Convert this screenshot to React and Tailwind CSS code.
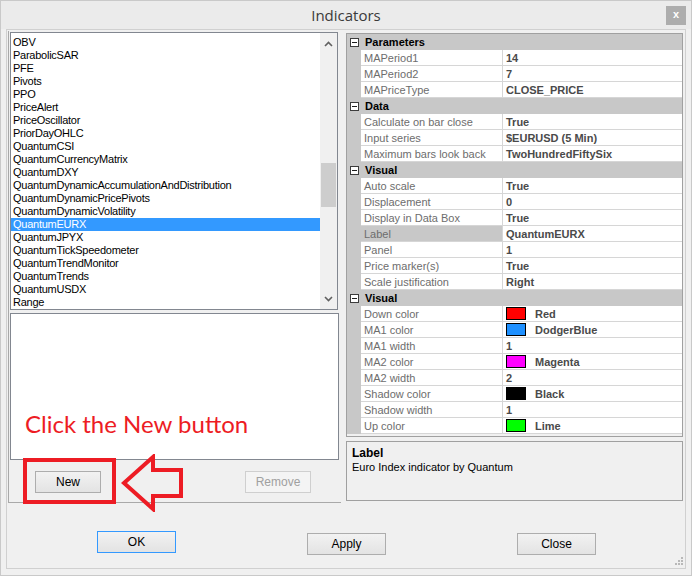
const indicators = [
  "OBV",
  "ParabolicSAR",
  "PFE",
  "Pivots",
  "PPO",
  "PriceAlert",
  "PriceOscillator",
  "PriorDayOHLC",
  "QuantumCSI",
  "QuantumCurrencyMatrix",
  "QuantumDXY",
  "QuantumDynamicAccumulationAndDistribution",
  "QuantumDynamicPricePivots",
  "QuantumDynamicVolatility",
  "QuantumEURX",
  "QuantumJPYX",
  "QuantumTickSpeedometer",
  "QuantumTrendMonitor",
  "QuantumTrends",
  "QuantumUSDX",
  "Range",
];

const sections = [
  {
    name: "Parameters",
    rows: [
      { name: "MAPeriod1", value: "14" },
      { name: "MAPeriod2", value: "7" },
      { name: "MAPriceType", value: "CLOSE_PRICE" },
    ],
  },
  {
    name: "Data",
    rows: [
      { name: "Calculate on bar close", value: "True" },
      { name: "Input series", value: "$EURUSD (5 Min)" },
      { name: "Maximum bars look back", value: "TwoHundredFiftySix" },
    ],
  },
  {
    name: "Visual",
    rows: [
      { name: "Auto scale", value: "True" },
      { name: "Displacement", value: "0" },
      { name: "Display in Data Box", value: "True" },
      { name: "Label", value: "QuantumEURX", selected: true },
      { name: "Panel", value: "1" },
      { name: "Price marker(s)", value: "True" },
      { name: "Scale justification", value: "Right" },
    ],
  },
  {
    name: "Visual",
    rows: [
      { name: "Down color", value: "Red", color: "#ff0000" },
      { name: "MA1 color", value: "DodgerBlue", color: "#1e90ff" },
      { name: "MA1 width", value: "1" },
      { name: "MA2 color", value: "Magenta", color: "#ff00ff" },
      { name: "MA2 width", value: "2" },
      { name: "Shadow color", value: "Black", color: "#000000" },
      { name: "Shadow width", value: "1" },
      { name: "Up color", value: "Lime", color: "#00ff00" },
    ],
  },
];

const MinusBox = () => (
  <div className="w-[9px] h-[9px] border border-[#3c3c3c] bg-white flex items-center justify-center">
    <div className="w-[5px] h-[1px] bg-[#1e1e1e]" />
  </div>
);

const Chevron = ({ up }) => (
  <svg width="9" height="6" viewBox="0 0 9 6">
    <path
      d={up ? "M1 5 L4.5 1.5 L8 5" : "M1 1 L4.5 4.5 L8 1"}
      fill="none"
      stroke="#606060"
      strokeWidth="1.6"
    />
  </svg>
);

const WinButton = ({ children, width, focused, disabled }) => (
  <button
    className={`h-[22px] ${width} border ${
      focused ? "border-[#3399ff]" : disabled ? "border-[#cfcfcf]" : "border-[#adadad]"
    } ${disabled ? "bg-[#f4f4f4] text-[#a0a0a0]" : "bg-gradient-to-b from-[#f2f2f2] to-[#e3e3e3] text-black"} text-[12px] leading-none`}
  >
    {children}
  </button>
);

const PropertyRow = ({ row }) => (
  <div className="flex h-[16px]">
    <div className="w-[14px] bg-[#c8c8c8]" />
    <div
      className={`w-[142px] border-r border-b border-[#d6d6d6] pl-[3px] pt-[1px] text-[#6d6d6d] leading-[14px] whitespace-nowrap ${
        row.selected ? "bg-[#c8c8c8]" : "bg-white"
      }`}
    >
      {row.name}
    </div>
    <div className="flex-1 flex items-center border-b border-[#d6d6d6] bg-white pl-[3px] font-bold text-[#4a4a4a] whitespace-nowrap">
      {row.color && (
        <div className="w-[20px] h-[13px] border border-black mr-[9px]" style={{ backgroundColor: row.color }} />
      )}
      <span className="leading-[14px] pt-[1px]">{row.value}</span>
    </div>
  </div>
);

const App = () => {
  return (
    <div
      className="w-[692px] h-[576px] bg-[#f0f0f0] border border-[#c9c9c9] flex flex-col overflow-hidden"
      style={{ fontFamily: '"Liberation Sans", Arial, sans-serif' }}
    >
      <div className="h-[28px] relative flex items-center justify-center bg-[#ebebeb]">
        <span className="text-[15px] text-[#3a3a3a] mt-[1px]" style={{ fontFamily: '"Open Sans", sans-serif' }}>
          Indicators
        </span>
        <div className="absolute right-[5px] top-[5px] w-[20px] h-[19px] bg-[#adadad] flex items-center justify-center text-white text-[11px] font-bold leading-none pb-[2px]">
          x
        </div>
      </div>

      <div className="mx-[5px] h-[540px] border border-[#d0d0d0] relative flex flex-col">
        <div className="flex pt-[1px] pl-[1px]">
          {/* left panel */}
          <div className="w-[333px] h-[472px] border-l border-b border-[#a9a9a9] flex flex-col pl-[1px] pt-[1px]">
            <div className="w-[328px] h-[278px] border border-[#828790] bg-white flex">
              <div className="flex-1 pt-[3px] text-[11px] tracking-[-0.25px] text-black">
                {indicators.map((name) => (
                  <div
                    key={name}
                    className={`h-[13px] leading-[13px] pl-[2px] whitespace-nowrap ${
                      name === "QuantumEURX" ? "bg-[#3399ff] text-white" : ""
                    }`}
                  >
                    {name}
                  </div>
                ))}
              </div>
              <div className="w-[17px] bg-[#f0f0f0] flex flex-col">
                <div className="h-[17px] flex items-center justify-center pt-[4px]">
                  <Chevron up />
                </div>
                <div className="flex-1">
                  <div className="mt-[113px] h-[44px] mx-[1px] bg-[#cdcdcd]" />
                </div>
                <div className="h-[17px] flex items-center justify-center pb-[4px]">
                  <Chevron />
                </div>
              </div>
            </div>
            <div className="w-[329px] h-[147px] mt-[3px] border border-[#828790] bg-white flex flex-col justify-end pl-[14px] pb-[23px]">
              <span className="text-[24px] text-[#ed1c24] leading-none" style={{ fontFamily: "Lato, sans-serif" }}>
                Click the New button
              </span>
            </div>
            <div className="flex-1 relative flex items-start pt-[9px]">
              <div className="ml-[25px]">
                <WinButton width="w-[66px]">New</WinButton>
              </div>
              <div className="ml-[144px]">
                <WinButton width="w-[66px]" disabled>
                  Remove
                </WinButton>
              </div>
              {/* annotation overlay */}
              <div className="absolute left-[13px] top-[-2px] w-[93px] h-[46px] border-4 border-[#ed1c24]" />
              <svg className="absolute left-[111px] top-[-6px]" width="64" height="58" viewBox="0 0 64 58">
                <polygon
                  points="3,29 32,3 32,16 60,16 60,42 32,42 32,55"
                  fill="none"
                  stroke="#ed1c24"
                  strokeWidth="4"
                />
              </svg>
            </div>
          </div>

          {/* right panel */}
          <div className="ml-[5px] w-[337px] flex flex-col pt-[2px]">
            <div className="h-[404px] border border-[#a0a0a0] bg-[#f0f0f0] text-[11px]">
              {sections.map((section, i) => (
                <div key={i}>
                  <div className="h-[16px] bg-[#c8c8c8] flex items-center">
                    <div className="w-[14px] flex justify-center">
                      <MinusBox />
                    </div>
                    <span className="ml-[4px] font-bold text-black leading-none">{section.name}</span>
                  </div>
                  {section.rows.map((row) => (
                    <PropertyRow key={row.name} row={row} />
                  ))}
                </div>
              ))}
            </div>
            <div className="mt-[4px] h-[60px] border border-[#a0a0a0] bg-[#f0f0f0] px-[5px] pt-[4px] text-[11px] text-black">
              <div className="font-bold text-[12px] leading-[14px]">Label</div>
              <div className="leading-[14px]">Euro Index indicator by Quantum</div>
            </div>
          </div>
        </div>

        <div className="flex pt-[28px] pl-[90px]">
          <WinButton width="w-[79px]" focused>
            OK
          </WinButton>
          <div className="ml-[131px]">
            <WinButton width="w-[79px]">Apply</WinButton>
          </div>
          <div className="ml-[131px]">
            <WinButton width="w-[79px]">Close</WinButton>
          </div>
        </div>

        <svg className="absolute right-[2px] bottom-[3px]" width="8" height="8" viewBox="0 0 8 8">
          <rect x="6" y="0" width="2" height="2" fill="#b8b8b8" />
          <rect x="3" y="3" width="2" height="2" fill="#b8b8b8" />
          <rect x="6" y="3" width="2" height="2" fill="#b8b8b8" />
          <rect x="0" y="6" width="2" height="2" fill="#b8b8b8" />
          <rect x="3" y="6" width="2" height="2" fill="#b8b8b8" />
          <rect x="6" y="6" width="2" height="2" fill="#b8b8b8" />
        </svg>
      </div>
    </div>
  );
};

export default App;
